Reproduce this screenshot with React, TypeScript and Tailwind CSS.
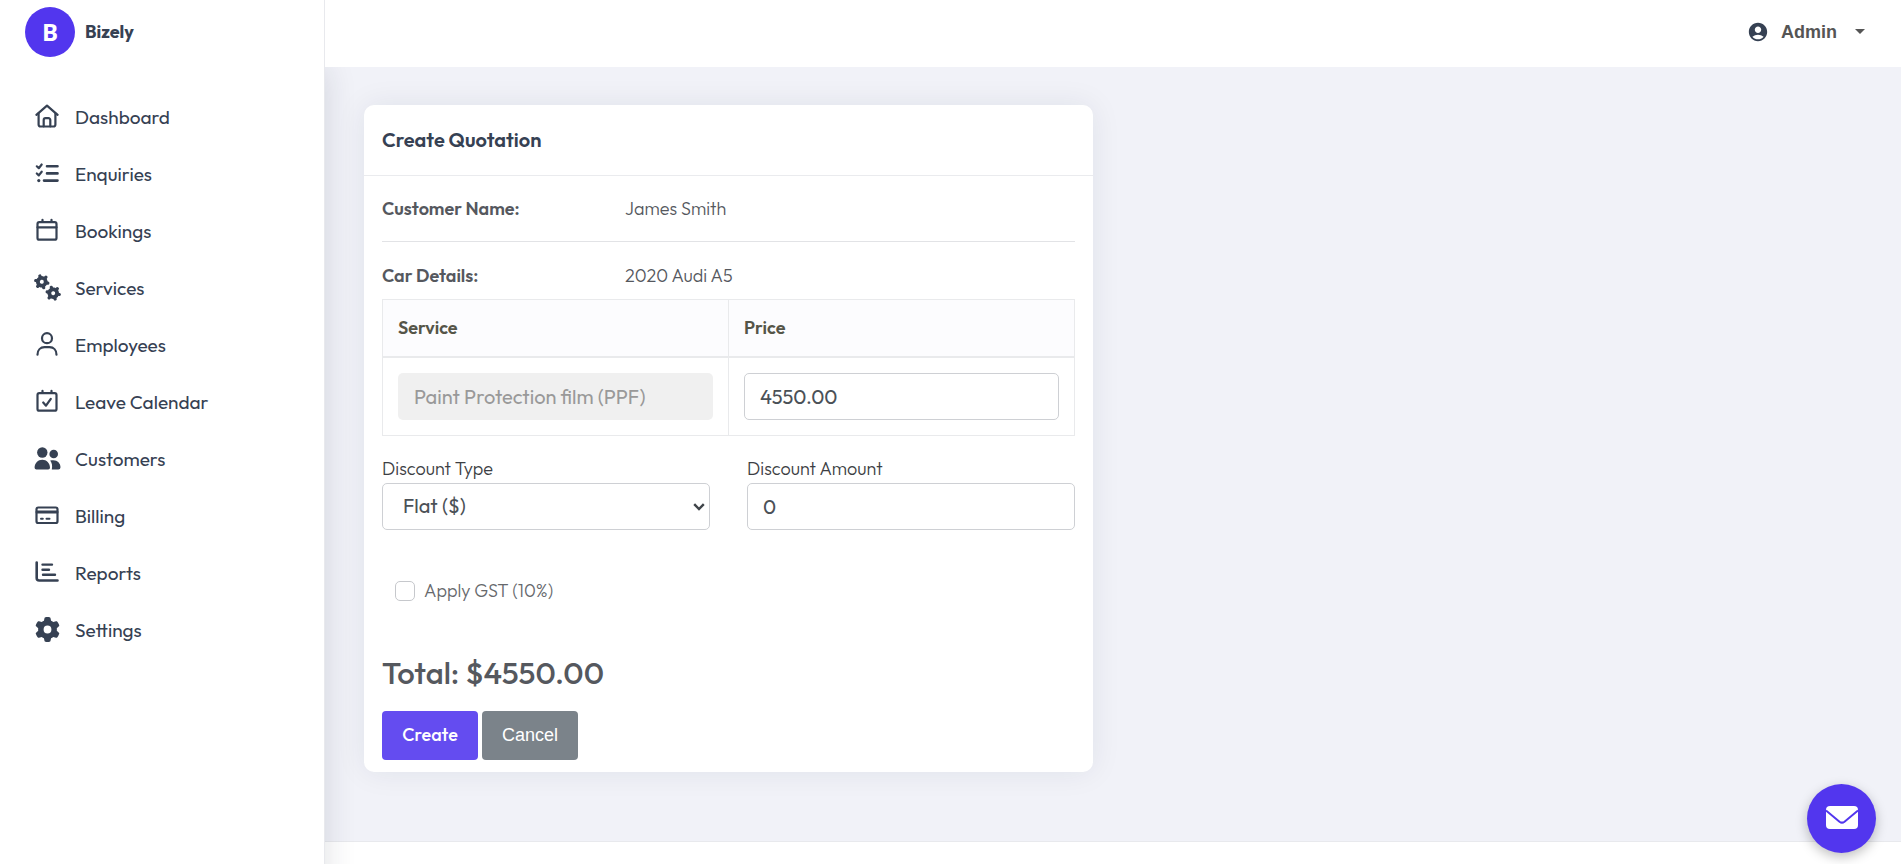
import { useState } from 'react';
import type { ReactNode } from 'react';
import { FaGear } from 'react-icons/fa6';
import { MdAccountCircle } from 'react-icons/md';

const LineIcon = ({ children }: { children: ReactNode }) => (
  <svg
    width="24"
    height="24"
    viewBox="0 0 24 24"
    fill="none"
    stroke="currentColor"
    strokeWidth="2.2"
    strokeLinecap="round"
    strokeLinejoin="round"
    aria-hidden="true"
  >
    {children}
  </svg>
);

const HomeIcon = () => (
  <LineIcon>
    <path d="M1.4 10.8 12 1.6l10.6 9.2" />
    <path d="M3.6 9.5v11a2 2 0 0 0 2 2h12.8a2 2 0 0 0 2-2v-11" />
    <path d="M8.7 22.3V16a1.8 1.8 0 0 1 1.8-1.8h3a1.8 1.8 0 0 1 1.8 1.8v6.3" />
  </LineIcon>
);

const ListCheckIcon = () => (
  <LineIcon>
    <path d="M1.8 5.3l2 1.9 2.9-3.7M1.8 12.5l2 1.9 2.9-3.7" />
    <path d="M12 5.2h10.5M12 12.4h10.5M9 19.6h13.5" strokeWidth="2.6" />
    <circle cx="3.8" cy="19.6" r="1.6" fill="currentColor" stroke="none" />
  </LineIcon>
);

const CalendarIcon = () => (
  <LineIcon>
    <rect x="2.5" y="4.2" width="19" height="17.5" rx="1.8" />
    <path d="M2.5 9.3h19M7.5 1.8V4M16.5 1.8V4" />
  </LineIcon>
);

const CalendarCheckIcon = () => (
  <LineIcon>
    <rect x="2.5" y="4.2" width="19" height="17.5" rx="1.8" />
    <path d="M7.5 1.8V4M16.5 1.8V4M8.2 13.5l2.8 3.2 4.8-6.9" />
  </LineIcon>
);

const TEETH = [0, 60, 120, 180, 240, 300];

const SmallGear = ({ x, y }: { x: number; y: number }) => (
  <g transform={`translate(${x} ${y}) rotate(12)`} fill="none" stroke="currentColor" strokeLinecap="round">
    <circle r="3.9" strokeWidth="3.8" />
    {TEETH.map(deg => (
      <path key={deg} d="M5 0h1.2" strokeWidth="3.2" transform={`rotate(${deg})`} />
    ))}
  </g>
);

const GearsIcon = () => (
  <svg width="27" height="27" viewBox="0 0 27 27" aria-hidden="true">
    <SmallGear x={7.8} y={7.8} />
    <SmallGear x={19.2} y={19.2} />
  </svg>
);

const UserIcon = () => (
  <LineIcon>
    <circle cx="12" cy="6.2" r="5" />
    <path d="M2.5 22.7c0-4.6 3-7.5 7-7.5h5c4 0 7 2.9 7 7.5" />
  </LineIcon>
);

const UsersIcon = () => (
  <svg width="27" height="24" viewBox="0 0 27 24" fill="currentColor" aria-hidden="true">
    <circle cx="8.3" cy="6.5" r="5.2" />
    <circle cx="19.7" cy="8" r="4.3" />
    <path d="M.6 21.7c0-4.7 3.4-8 7.7-8s7.7 3.3 7.7 8a1.8 1.8 0 0 1-1.8 1.8H2.4a1.8 1.8 0 0 1-1.8-1.8z" />
    <path d="M16.2 14.6c6-1.8 10.3 1.8 10.3 6.7a2.2 2.2 0 0 1-2.2 2.2h-6.500c.8-3.600.2-6.500-1.600-8.900z" />
  </svg>
);

const CardIcon = () => (
  <LineIcon>
    <rect x="1.5" y="4.5" width="21" height="15.5" rx="1.8" />
    <path d="M2 9h20" strokeWidth="3" />
    <path d="M6 15.7h1.8M11.5 15.7h3" strokeWidth="2" />
  </LineIcon>
);

const ReportIcon = () => (
  <LineIcon>
    <path d="M1.7 2.5v15.5a2.5 2.5 0 0 0 2.5 2.5h18.3" strokeWidth="2.6" />
    <path d="M7.5 4.6h9.5M7.5 9.8h6.5M8 14.8h12" strokeWidth="2.4" />
  </LineIcon>
);

const NAV_ITEMS = [
  { label: 'Dashboard', icon: <HomeIcon /> },
  { label: 'Enquiries', icon: <ListCheckIcon /> },
  { label: 'Bookings', icon: <CalendarIcon /> },
  { label: 'Services', icon: <GearsIcon /> },
  { label: 'Employees', icon: <UserIcon /> },
  { label: 'Leave Calendar', icon: <CalendarCheckIcon /> },
  { label: 'Customers', icon: <UsersIcon /> },
  { label: 'Billing', icon: <CardIcon /> },
  { label: 'Reports', icon: <ReportIcon /> },
  { label: 'Settings', icon: <FaGear size={25} /> },
];

const Sidebar = () => (
  <aside className="z-10 w-[325px] shrink-0 border-r border-[#e8e9ed] bg-white text-[#364153] shadow-[0_67px_30px_rgba(30,35,60,0.14)]">
    <a href="#" className="flex h-16 items-center gap-2.5 pl-[25px] text-lg font-bold">
      <span className="flex size-[50px] items-center justify-center rounded-full bg-[#5236ee] font-['Open_Sans',sans-serif] text-2xl text-white">
        B
      </span>
      Bizely
    </a>
    <nav className="pt-[25px]">
      {NAV_ITEMS.map(item => (
        <a key={item.label} href="#" className="flex h-[57px] items-center text-[19px]">
          <span className="ml-[33px] mr-3.5 flex w-7 justify-center pb-[3px]">{item.icon}</span>
          {item.label}
        </a>
      ))}
    </nav>
  </aside>
);

const TopBar = () => (
  <header className="z-20 flex h-[67px] shrink-0 items-center justify-end bg-white pr-[38px] pb-1">
    <button className="flex items-center font-['Liberation_Sans',sans-serif] text-lg font-bold text-[#555]">
      <MdAccountCircle size={22} className="mr-3 text-[#364153]" />
      Admin
      <svg className="ml-[18px]" width="10" height="5" viewBox="0 0 10 5" fill="currentColor" aria-hidden="true">
        <path d="M0 0h10L5 5z" />
      </svg>
    </button>
  </header>
);

const FIELD = 'block h-[47px] w-full rounded-[5px] border border-[#ced0d4] bg-white px-[15px] text-xl text-[#4b5157]';

const QuotationCard = () => {
  const [price, setPrice] = useState('4550.00');
  const [discountType, setDiscountType] = useState('flat');
  const [discount, setDiscount] = useState('0');
  const [gst, setGst] = useState(false);

  const base = Number(price) || 0;
  const off = discountType === 'flat' ? Number(discount) || 0 : (base * (Number(discount) || 0)) / 100;
  const total = (base - off) * (gst ? 1.1 : 1);

  return (
    <section className="w-full max-w-[729px] rounded-[10px] bg-white pb-3 text-lg text-[#55585e] shadow-[0_0_30px_rgba(30,35,60,0.08)]">
      <h4 className="flex h-[71px] items-center border-b border-[#eaebee] px-[18px] text-xl font-semibold text-[#364153]">
        Create Quotation
      </h4>
      <form className="px-[18px]" onSubmit={e => e.preventDefault()}>
        <dl>
          <div className="flex h-[66px] items-center border-b border-[#e2e3e6]">
            <dt className="w-[243px] font-semibold">Customer Name:</dt>
            <dd className="font-light">James Smith</dd>
          </div>
          <div className="flex h-[57px] items-end pb-[9px]">
            <dt className="w-[243px] font-semibold">Car Details:</dt>
            <dd className="font-light">2020 Audi A5</dd>
          </div>
        </dl>

        <table className="w-full table-fixed border-collapse">
          <thead>
            <tr className="h-[57px] bg-[#fcfcfe] text-left text-[#555548]">
              <th className="border border-b-2 border-[#e9eaec] px-[15px] font-semibold">Service</th>
              <th className="border border-b-2 border-[#e9eaec] px-[15px] font-semibold">Price</th>
            </tr>
          </thead>
          <tbody>
            <tr>
              <td className="border border-[#e9eaec] p-[15px]">
                <input
                  aria-label="Service"
                  disabled
                  value="Paint Protection film (PPF)"
                  className="block h-[47px] w-full rounded-[5px] bg-[#f0f0f0] px-4 text-xl text-[#999]"
                />
              </td>
              <td className="border border-[#e9eaec] p-[15px]">
                <input aria-label="Price" value={price} onChange={e => setPrice(e.target.value)} className={FIELD} />
              </td>
            </tr>
          </tbody>
        </table>

        <div className="grid grid-cols-2 gap-[37px] pt-[19px] text-[#3c3e43]">
          <div>
            <label htmlFor="discount-type" className="block font-light">Discount Type</label>
            <div className="relative">
              <select
                id="discount-type"
                value={discountType}
                onChange={e => setDiscountType(e.target.value)}
                className="block h-[47px] w-full appearance-none rounded-[5px] border border-[#ced0d4] bg-white pl-5 text-xl text-[#4b5157]"
              >
                <option value="flat">Flat ($)</option>
                <option value="percent">Percentage (%)</option>
              </select>
              <svg
                className="pointer-events-none absolute top-5 right-[5px]"
                width="12"
                height="8"
                viewBox="0 0 12 8"
                fill="none"
                stroke="#3f4449"
                strokeWidth="2.4"
                aria-hidden="true"
              >
                <path d="M1.2 1.2 6 6l4.8-4.8" />
              </svg>
            </div>
          </div>
          <div>
            <label htmlFor="discount-amount" className="block font-light">Discount Amount</label>
            <input id="discount-amount" value={discount} onChange={e => setDiscount(e.target.value)} className={FIELD} />
          </div>
        </div>

        <label className="mt-[47px] flex h-7 items-center gap-[9px] pl-[13px] font-light text-[#66686c]">
          <input
            type="checkbox"
            checked={gst}
            onChange={e => setGst(e.target.checked)}
            className="size-5 appearance-none rounded-[5px] border border-[#c6c8cc] bg-white checked:bg-[#5236ee]"
          />
          Apply GST (10%)
        </label>

        <h2 className="mt-12 text-[31px] leading-10 font-medium">Total: ${total.toFixed(2)}</h2>

        <div className="mt-[18px] flex gap-1 text-white">
          <button type="submit" className="h-[49px] w-24 rounded-[4px] bg-[#644cf0] font-medium">Create</button>
          <button type="button" className="h-[49px] w-24 rounded-[4px] bg-[#7b838a] font-['Liberation_Sans',sans-serif]">
            Cancel
          </button>
        </div>
      </form>
    </section>
  );
};

export default function App() {
  return (
    <div className="flex min-h-screen bg-white font-[Outfit,Lato,sans-serif]">
      <Sidebar />
      <div className="flex min-w-0 flex-1 flex-col">
        <TopBar />
        <main className="mr-0.5 flex-1 border-b border-[#e8e9ed] bg-[#f1f2f8] px-[39px] pt-[38px] pb-[69px]">
          <QuotationCard />
        </main>
        <footer className="h-[23px] shrink-0" />
      </div>
      <button
        aria-label="Send message"
        className="fixed right-[27px] bottom-[11px] z-30 flex size-[69px] items-center justify-center rounded-full bg-[#5236ee] pb-[3px] text-white shadow-[0_4px_12px_rgba(0,0,0,0.25)]"
      >
        <svg width="32" height="23" viewBox="0 0 32 23" aria-hidden="true">
          <rect width="32" height="23" rx="4" fill="currentColor" />
          <path d="M0 4.5 13.5 15.7q2.5 1.9 5 0L32 4.5" fill="none" stroke="#5236ee" strokeWidth="2" />
        </svg>
      </button>
    </div>
  );
}
